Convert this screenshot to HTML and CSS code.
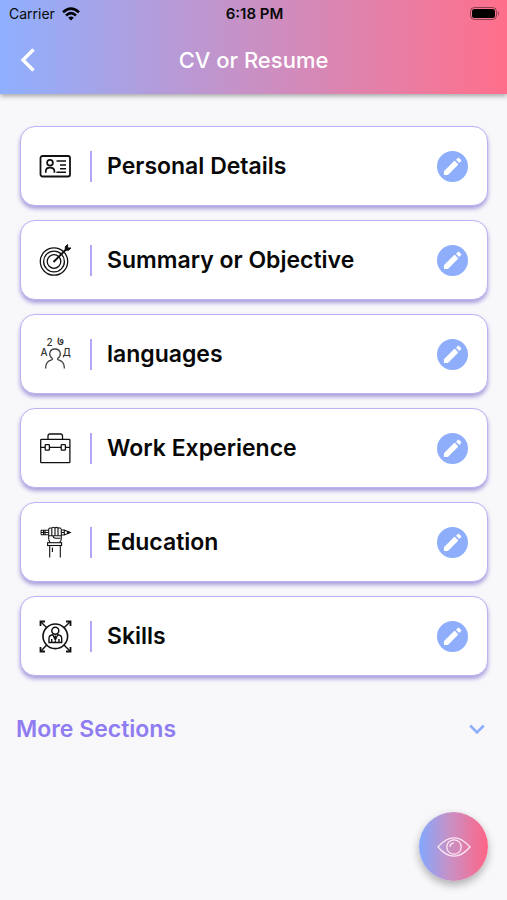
FILE: index.html
```
<!DOCTYPE html>
<html lang="en">
<head>
	<meta charset="UTF-8">
	<meta name="viewport" content="width=device-width, initial-scale=1.0">
	<title>CV or Resume</title>
	<link rel="stylesheet" href="styles.css">
</head>
<body>
	<!-- shared shapes -->
	<svg class="defs" width="0" height="0" aria-hidden="true">
		<symbol id="pencil" viewBox="0 0 31 31">
			<path d="M7.6 20.6 17.6 10.6 20.4 13.4 10.4 23.4H7.6z" fill="#fff" stroke="#fff" stroke-width="1.4" stroke-linejoin="round"/>
			<path d="M19.3 8.7 20.7 7.4Q21.5 6.7 22.3 7.4L23.6 8.7Q24.3 9.5 23.6 10.3L22.3 11.7z" fill="#fff" stroke="#fff" stroke-width=".6" stroke-linejoin="round"/>
		</symbol>
	</svg>

	<header class="header">
		<div class="status">
			<div class="carrier">
				<span>Carrier</span>
				<svg width="18" height="14" viewBox="0 0 18 14">
					<g fill="none" stroke="#000" stroke-width="2.6">
						<path d="M1 5.2Q9-2 17 5.2"/>
						<path d="M4 8.4Q9 4 14 8.4"/>
					</g>
					<path d="M6.2 10.7Q9 8.5 11.8 10.7L9 13.6z"/>
				</svg>
			</div>
			<span class="time">6:18 PM</span>
			<div class="battery">
				<svg width="30" height="14" viewBox="0 0 30 14">
					<rect x=".5" y=".5" width="26" height="12" rx="4" fill="none" stroke="#000" stroke-opacity=".45"/>
					<rect x="2" y="2" width="23" height="9" rx="2.5"/>
					<path d="M28 4Q30 6.5 28 9z" opacity=".45"/>
				</svg>
			</div>
		</div>
		<div class="titleBar">
			<button class="back" aria-label="Back">
				<svg width="16" height="24" viewBox="0 0 16 24"><path d="M13.5 1.5 3 12l10.5 10.5" fill="none" stroke="#fff" stroke-width="3.4"/></svg>
			</button>
			<h1>CV or Resume</h1>
		</div>
	</header>

	<main>
		<ul class="cards">
			<li class="card">
				<svg class="icon" viewBox="0 0 32 32">
					<rect x="1.5" y="6" width="29.5" height="20.5" rx="2" stroke-width="1.8"/>
					<circle cx="11" cy="12.7" r="2.9" stroke-width="1.7"/>
					<path d="M6.8 22.8V21Q6.8 17.6 11 17.6T15.4 21V22.8" stroke-width="1.7"/>
					<path d="M17.5 11H27M21 15H27M21 18.8H27M17.5 22.3H27" stroke-width="1.4"/>
				</svg>
				<h2>Personal Details</h2>
				<button class="edit" aria-label="Edit Personal Details"><svg><use href="#pencil"/></svg></button>
			</li>
			<li class="card">
				<svg class="icon" viewBox="0 0 32 32">
					<circle cx="15" cy="17.5" r="13.7"/>
					<circle cx="15" cy="17.5" r="10.4"/>
					<circle cx="15" cy="17.5" r="6.8"/>
					<path d="M14.5 18 29 3.5" stroke-width="1.9"/>
					<path d="M26.3 6V2.6L28.6.5V4H32L29.6 6.2H26.3" stroke-width="1" fill="#111"/>
				</svg>
				<h2>Summary or Objective</h2>
				<button class="edit" aria-label="Edit Summary or Objective"><svg><use href="#pencil"/></svg></button>
			</li>
			<li class="card">
				<svg class="icon languages" viewBox="0 0 32 32">
					<path d="M6.7 30.5V29Q7 23.2 12.6 21.8 14 21.3 13.2 20.3 10.4 18.3 10.7 15.6 11.2 11 16 11T21.3 15.6Q21.6 18.3 18.8 20.3 18 21.3 19.4 21.8 25 23.2 25.3 29V30.5"/>
					<text x="7.5" y="8">2</text>
					<text class="digit" x="18" y="8">७</text>
					<text x="1.5" y="18">A</text>
					<text x="23.5" y="18">Д</text>
				</svg>
				<h2>languages</h2>
				<button class="edit" aria-label="Edit languages"><svg><use href="#pencil"/></svg></button>
			</li>
			<li class="card">
				<svg class="icon" viewBox="0 0 32 32">
					<rect x="1.7" y="7.4" width="29.2" height="23.3" rx=".8"/>
					<path d="M9 7.4V4Q9 2 11 2H21.5Q23.5 2 23.5 4V7.4"/>
					<path d="M1.7 15.4H6.2M10.4 15.4H22.2M26.4 15.4H31"/>
					<rect x="6.2" y="12.7" width="4.2" height="5.4" rx=".7"/>
					<rect x="22.2" y="12.7" width="4.2" height="5.4" rx=".7"/>
				</svg>
				<h2>Work Experience</h2>
				<button class="edit" aria-label="Edit Work Experience"><svg><use href="#pencil"/></svg></button>
			</li>
			<li class="card">
				<svg class="icon" viewBox="0 0 32 32">
					<g stroke-width="1.1">
						<path d="M9.5 4.3H2.3Q1.5 6.5 2.3 8.8H9.5M4.5 4.3V8.8M6 4.3V8.8M2.3 6.5H9.5"/>
						<path d="M22.5 4H25.3L31 6.5 25.3 9H22.5M25.3 4V9M22.5 6.5H25.3"/>
						<path d="M28.5 5.5 31 6.5 28.5 7.5z" fill="#111"/>
						<path d="M9.7 13.5V3.5Q9.7 2 11.2 2H12.8V9.8M12.8 2.5Q13 1.3 14.4 1.3T16 2.5V9.8M16 2Q17.5.8 19 2V9.8M19 2Q22.3 1.3 22.3 4V12.5Q22.3 15 20.5 16.5"/>
						<path d="M9.7 9.8H22M14 9.8Q14 12.3 17 12.3H21.5M9.7 13.5 11 16.7"/>
						<rect x="8.6" y="16.7" width="14" height="2.8"/>
						<path d="M10.7 19.5V31.5M21.3 19.5V31.5M13.4 21.5V26"/>
					</g>
				</svg>
				<h2>Education</h2>
				<button class="edit" aria-label="Edit Education"><svg><use href="#pencil"/></svg></button>
			</li>
			<li class="card">
				<svg class="icon" viewBox="0 0 32 32">
					<circle cx="16.3" cy="16.3" r="12.3" stroke-width="1.6"/>
					<path d="M2 2 8 8M31 2 24.7 8M2 31 8 24.7M31 31 24.7 24.7" stroke-width="1.4"/>
					<path d="M1.5 6V1.5H6M27 1.5H31.5V6M1.5 27V31.5H6M31.5 27V31.5H27" stroke-width="1.8"/>
					<circle cx="16.3" cy="10.7" r="3.5" stroke-width="1.5"/>
					<path d="M10 22.5V18.5Q10 15.2 13.8 14.8L16.3 20 18.8 14.8Q22.7 15.2 22.7 18.5V22.5zM16.3 15.5V22.5M12.7 19V22M20 19V22" stroke-width="1.4"/>
				</svg>
				<h2>Skills</h2>
				<button class="edit" aria-label="Edit Skills"><svg><use href="#pencil"/></svg></button>
			</li>
		</ul>

		<button class="more">
			<span>More Sections</span>
			<svg width="16" height="11" viewBox="0 0 16 11"><path d="M1.2 1.5 8 8.3l6.8-6.8" fill="none" stroke="#8eaefb" stroke-width="2.6"/></svg>
		</button>
	</main>

	<button class="preview" aria-label="Preview">
		<svg width="34" height="20" viewBox="0 0 34 20">
			<g fill="none" stroke="#fbe6f3" stroke-width="1.3">
				<path d="M1 10Q9 .8 17 .8T33 10Q25 19.2 17 19.2T1 10z"/>
				<circle cx="17" cy="10" r="7.2"/>
				<path d="M13 9.7Q13.2 6.3 16.8 6" stroke-width="1.5"/>
			</g>
		</svg>
	</button>
</body>
</html>
```
FILE: styles.css
```
* { box-sizing: border-box; }

body {
	margin: 0;
	min-height: 100vh;
	background: #f8f8fb;
	font-family: Inter, "Liberation Sans", sans-serif;
	color: #080808;
}

h1, h2, ul { margin: 0; padding: 0; }

button {
	border: 0;
	padding: 0;
	background: none;
	font: inherit;
	color: inherit;
	cursor: pointer;
}

svg { display: block; }
.defs { position: absolute; }

.header {
	background: linear-gradient(to right, #8fb0ff, #c990c4 50%, #ff6f8b);
	box-shadow: 0 2px 5px rgba(0,0,0,0.35);
}

.status {
	display: grid;
	grid-template-columns: 1fr auto 1fr;
	align-items: center;
	height: 27px;
	padding: 0 7px 0 9px;
	font-size: 14px;
}

.carrier { display: flex; align-items: center; gap: 7px; }
.time { font-size: 15px; font-weight: 600; }
.battery { justify-self: end; }

.titleBar {
	display: grid;
	grid-template-columns: 1fr auto 1fr;
	align-items: center;
	height: 67px;
	padding: 0 20px 2px;
}

.titleBar h1 {
	font-size: 22px;
	font-weight: 500;
	color: #fff;
}

.back { justify-self: start; }

.cards {
	display: flex;
	flex-direction: column;
	gap: 14px;
	padding: 32px 19px 0 20px;
	list-style: none;
}

.card {
	display: flex;
	align-items: center;
	height: 80px;
	padding: 0 19px 0 18px;
	background: #fff;
	border: 1px solid #bdb2f3;
	border-radius: 15px;
	box-shadow: 0 3px 4px #a99edb;
}

.icon {
	width: 32px;
	height: 32px;
	flex: none;
	overflow: visible;
	fill: none;
	stroke: #111;
	stroke-width: 1.3;
}

.languages { stroke: #444; }
.languages text {
	fill: #333;
	stroke: none;
	font-family: Inter, "Noto Sans", sans-serif;
	font-size: 10px;
	font-weight: 500;
}
.languages .digit { font-size: 13px; }

.card h2 {
	flex: 1;
	margin-left: 19px;
	padding-left: 15px;
	border-left: 2px solid #b3a6f7;
	font-size: 23px;
	line-height: 31px;
	font-weight: 600;
}

.edit {
	width: 31px;
	height: 31px;
	border-radius: 50%;
	background: #8eaefb;
}
.edit svg { width: 31px; height: 31px; }

.more {
	display: flex;
	align-items: center;
	justify-content: space-between;
	width: 100%;
	margin-top: 36px;
	padding: 0 22px 0 16px;
	font-size: 23px;
	line-height: 34px;
	font-weight: 600;
	color: #8f7cf0;
}

.preview {
	position: fixed;
	right: 19px;
	bottom: 19px;
	display: flex;
	align-items: center;
	justify-content: center;
	width: 69px;
	height: 69px;
	border-radius: 50%;
	background: linear-gradient(to right, #82a8ff, #c990c4 45%, #ff6486);
	box-shadow: 0 4px 8px rgba(0,0,0,0.3);
}
```
